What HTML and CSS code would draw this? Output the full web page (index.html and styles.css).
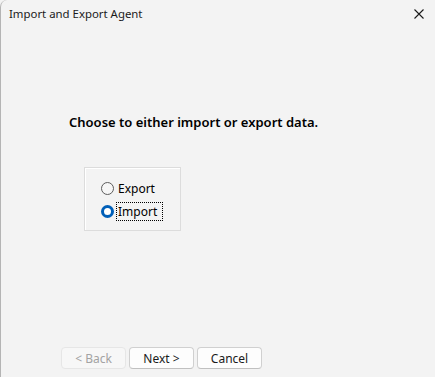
FILE: index.html
```html
<!DOCTYPE html>
<html lang="en">

<head>
    <meta charset="UTF-8">
    <meta name="viewport" content="width=device-width, initial-scale=1.0">
    <title>Import and Export Agent</title>
    <link rel="stylesheet" href="styles.css">
</head>

<body>
    <div class="window">

        <!-- Title bar -->
        <div class="titlebar">
            <span class="title">Import and Export Agent</span>
            <button class="close" type="button" aria-label="Close">
                <svg width="10" height="10" viewBox="0 0 10 10">
                    <path d="M0.5 0.5 L9.5 9.5 M9.5 0.5 L0.5 9.5" stroke="#1a1a1a" stroke-width="1.1" fill="none"/>
                </svg>
            </button>
        </div>

        <!-- Page content -->
        <div class="content">
            <h2 class="prompt">Choose to either import or export data.</h2>

            <div class="choice-box">
                <label class="radio">
                    <input type="radio" name="mode" value="export">
                    <span class="dot"></span>
                    <span class="radio-text">Export</span>
                </label>
                <label class="radio">
                    <input type="radio" name="mode" value="import" checked>
                    <span class="dot"></span>
                    <span class="radio-text focused">Import</span>
                </label>
            </div>
        </div>

        <!-- Wizard buttons -->
        <div class="buttons">
            <button type="button" class="btn" disabled>&lt; Back</button>
            <button type="button" class="btn">Next &gt;</button>
            <button type="button" class="btn">Cancel</button>
        </div>
    </div>
</body>

</html>
```

FILE: styles.css
```css
/* General */
html, body {
    margin: 0;
    height: 100%;
}

body {
    font-family: "Noto Sans", "Open Sans", sans-serif;
    background-color: #f3f3f3;
    color: #000;
}

.window {
    height: 100%;
    box-sizing: border-box;
    border-left: 1px solid #b4b4b4;
    border-top-left-radius: 7px;
    background-color: #f3f3f3;
    display: flex;
    flex-direction: column;
}

/* Title bar */
.titlebar {
    height: 27px;
    display: flex;
    align-items: center;
    justify-content: space-between;
    padding-left: 8px;
}

.title {
    font-size: 11.4px;
    color: #1a1a1a;
}

.close {
    width: 28px;
    height: 27px;
    border: none;
    background: none;
    padding: 0;
    margin-right: 2px;
    display: flex;
    align-items: center;
    justify-content: center;
}

/* Content */
.content {
    flex: 1;
    padding-left: 68px;
}

.prompt {
    margin: 86px 0 0 0;
    font-size: 13px;
    font-weight: 600;
}

.choice-box {
    margin: 36px 0 0 15px;
    width: 97px;
    height: 64px;
    box-sizing: border-box;
    border: 1px solid #dcdcdc;
    box-shadow: inset 1px 1px 0 #ffffff;
    padding: 12px 0 0 16px;
    display: flex;
    flex-direction: column;
    gap: 6px;
}

.radio {
    display: flex;
    align-items: center;
    gap: 2px;
    font-size: 12px;
    height: 17px;
}

.radio input {
    display: none;
}

.dot {
    width: 13px;
    height: 13px;
    box-sizing: border-box;
    border-radius: 50%;
    border: 1px solid #5c5c5c;
    background-color: #f6f6f6;
}

.radio input:checked + .dot {
    border: 3.5px solid #005fb8;
    background-color: #ffffff;
}

.radio-text {
    padding: 0 1px;
    border: 1px dotted transparent;
}

.radio-text.focused {
    border-color: #000;
    padding-right: 5px;
}

/* Buttons */
.buttons {
    display: flex;
    gap: 3px;
    padding: 0 0 8px 60px;
}

.btn {
    width: 65px;
    height: 22px;
    font-family: "Noto Sans", "Open Sans", sans-serif;
    font-size: 12px;
    color: #1a1a1a;
    background-color: #fdfdfd;
    border: 1px solid #d0d0d0;
    border-bottom-color: #c0c0c0;
    border-radius: 4px;
    padding: 0;
}

.btn:disabled {
    color: #a3a3a3;
    background-color: #f7f7f7;
    border-color: #e6e6e6;
}
```
